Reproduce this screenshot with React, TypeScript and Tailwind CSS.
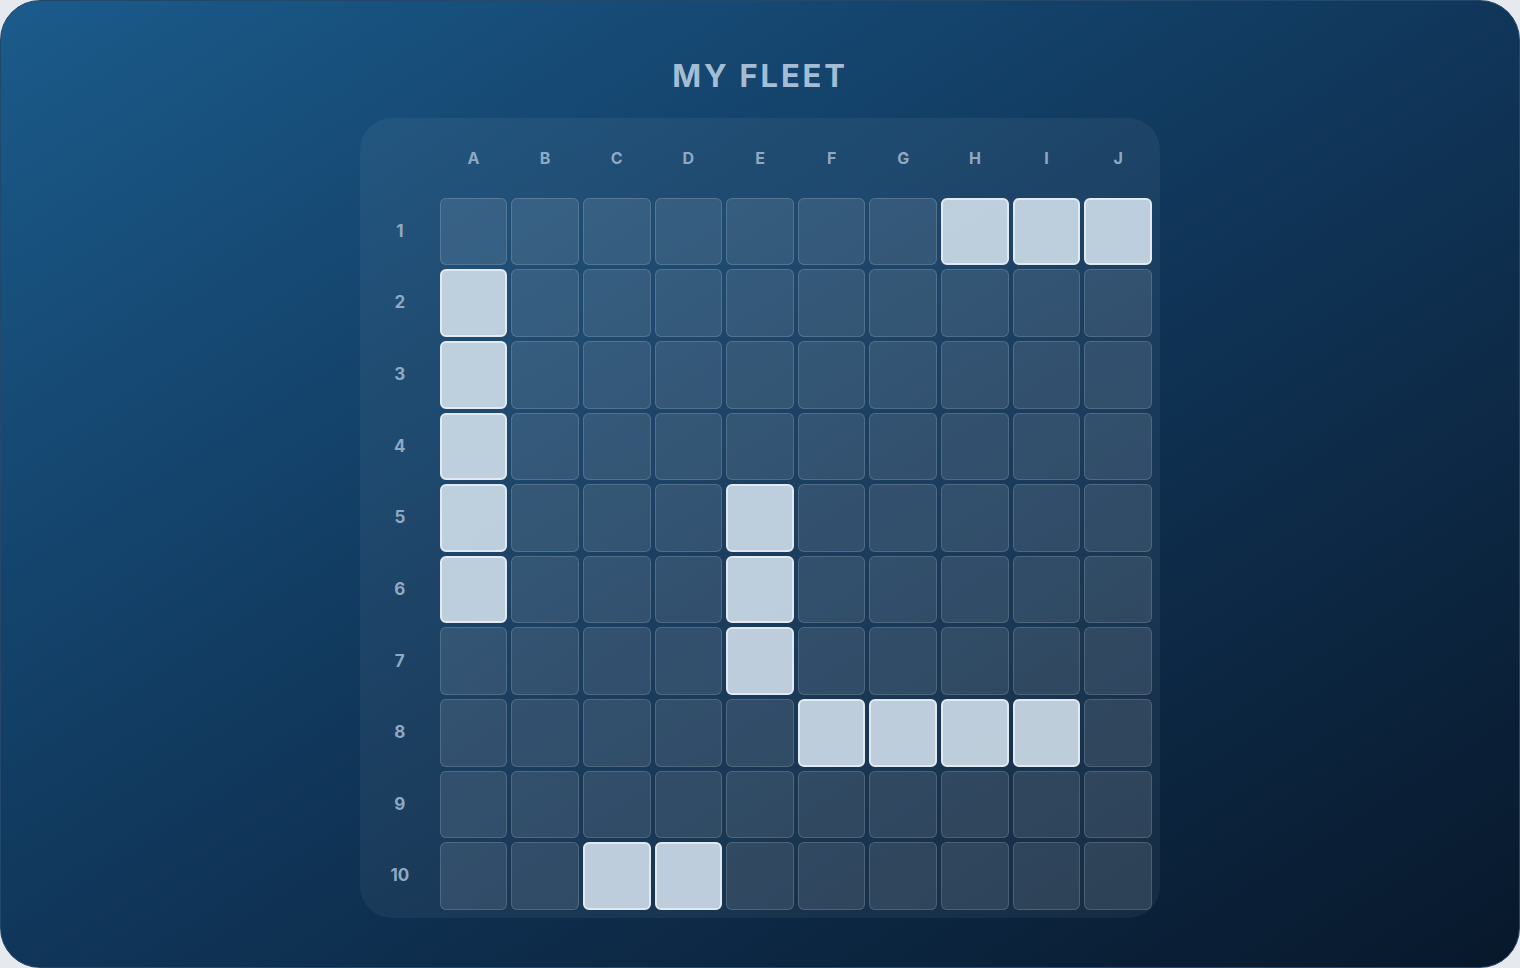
import React from "react";

const COLS = ["A", "B", "C", "D", "E", "F", "G", "H", "I", "J"];
const ROWS = [1, 2, 3, 4, 5, 6, 7, 8, 9, 10];

// ship placements, keyed as column+row
const SHIPS = new Set([
  "H1", "I1", "J1",
  "A2", "A3", "A4", "A5", "A6",
  "E5", "E6", "E7",
  "F8", "G8", "H8", "I8",
  "C10", "D10",
]);

function Cell({ ship }: { ship: boolean }) {
  return ship ? (
    <div className="aspect-square rounded-md border-2 border-[#e1eaf2] bg-[#cfdeea]/90" />
  ) : (
    <div className="aspect-square rounded-md border border-white/15 bg-white/10" />
  );
}

export default function App() {
  return (
    <div className="min-h-screen bg-[#e6eaee]" style={{ fontFamily: "Inter, 'Noto Sans', sans-serif" }}>
      <div className="flex h-[968px] w-[1520px] flex-col items-center rounded-[40px] border-[1.5px] border-[#24486a] bg-linear-to-br from-[#1b5b8b] via-[#10365a] to-[#08182b]">
        <h1 className="mt-[52px] text-[31px] font-bold leading-[46px] tracking-[0.09em] text-[#a4bdd4]">MY FLEET</h1>

        <div className="mt-[19px] w-[800px] rounded-[32px] bg-white/5 p-2">
          <div className="grid grid-cols-11 gap-1">
            <div className="aspect-square" />
            {COLS.map((c) => (
              <div key={c} className="flex aspect-square items-center justify-center pb-1 text-[16px] font-bold text-[#8fa9c2]">
                {c}
              </div>
            ))}
            {ROWS.map((r) => (
              <React.Fragment key={r}>
                <div className="flex aspect-square items-center justify-center pr-1 text-[17px] font-bold text-[#8fa9c2]">
                  {r}
                </div>
                {COLS.map((c) => (
                  <Cell key={c + r} ship={SHIPS.has(c + r)} />
                ))}
              </React.Fragment>
            ))}
          </div>
        </div>
      </div>
    </div>
  );
}
